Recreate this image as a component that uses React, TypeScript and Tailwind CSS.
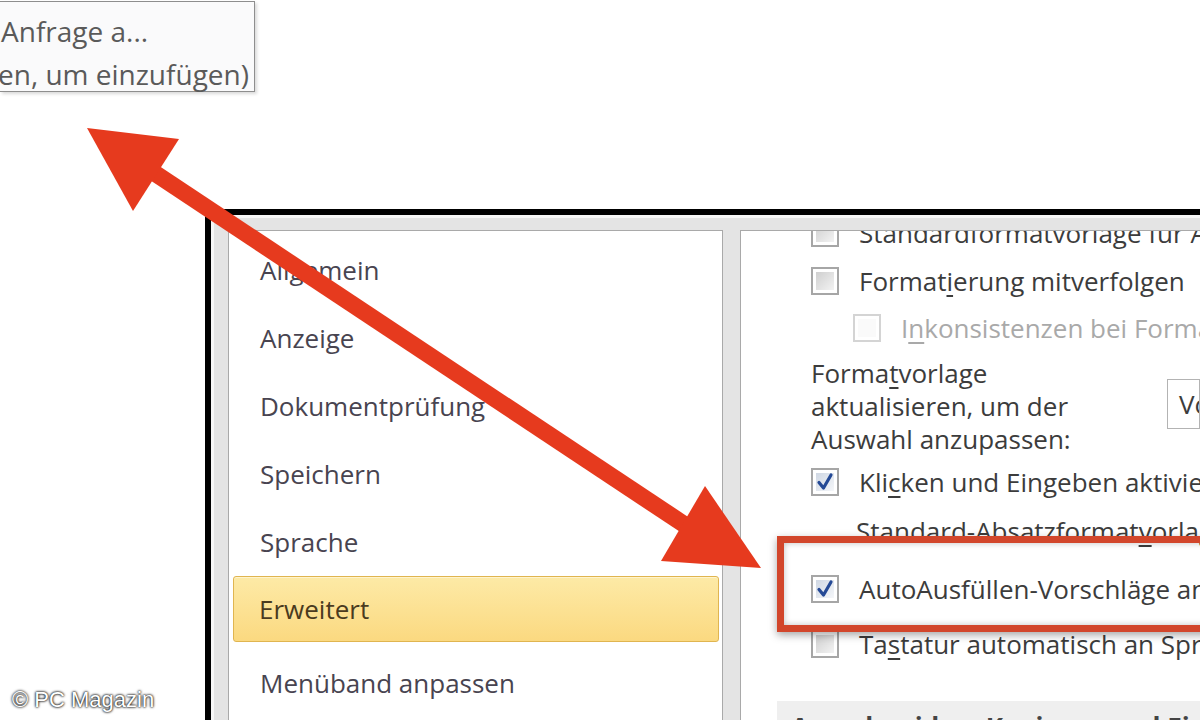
import React from "react";

const font = "font-['Open_Sans','Noto_Sans',sans-serif]";

function Box({ checked = false, faint = false }: { checked?: boolean; faint?: boolean }) {
  return (
    <div
      className={`relative h-[28px] w-[28px] shrink-0 border-2 ${
        faint ? "border-[#d4d4d4]" : "border-[#a6a6a6]"
      } bg-white p-[3px]`}
    >
      <div
        className={`h-full w-full ${
          faint
            ? "bg-[#fafafa]"
            : checked
              ? "bg-linear-to-br from-[#cfd7e3] to-[#f5f7fa]"
              : "bg-linear-to-br from-[#cfcfcf] to-[#f3f3f3]"
        }`}
      />
      {checked && (
        <svg viewBox="0 0 28 28" className="absolute left-[-2px] top-[-2px] h-[28px] w-[28px]">
          <path d="M8 14.5 L12.5 20 L20 7" fill="none" stroke="#254a96" strokeWidth="3.2" strokeLinecap="round" strokeLinejoin="round" />
        </svg>
      )}
    </div>
  );
}

const navItems = ["Allgemein", "Anzeige", "Dokumentprüfung", "Speichern", "Sprache"];

export default function App() {
  return (
    <div className={`relative flex h-[720px] w-[1200px] flex-col overflow-hidden bg-white ${font}`}>
      {/* popup fragment top left */}
      <div className="mt-[1px] flex h-[91px] w-[255px] flex-col border border-l-0 border-[#8e8e8e] bg-[#fafafb] text-[28px] leading-[40px] text-[#5a5a5a] shadow-[2px_2px_3px_rgba(0,0,0,0.15)]">
        <div className="mt-[9px] pl-[1px] whitespace-nowrap">Anfrage a...</div>
        <div className="-ml-[2px] mt-[3px] whitespace-nowrap">en, um einzufügen)</div>
      </div>

      {/* options dialog */}
      <div className="ml-[205px] mt-[117px] flex flex-1 border-l-[6px] border-t-[6px] border-black bg-[#e4e4e4] pl-[17px] pt-[15px] shadow-[inset_3px_3px_0_#f7f7f7]">
        {/* nav */}
        <div className="w-[495px] shrink-0 border border-b-0 border-[#a9a9a9] bg-white pt-[5px] text-[26px] text-[#484450]">
          {navItems.map((n) => (
            <div key={n} className="flex h-[68px] items-center pl-[31px]">
              {n}
            </div>
          ))}
          <div className="ml-[4px] mr-[3px] flex h-[66px] items-center rounded-[3px] border border-[#e0b550] bg-linear-to-b from-[#fdeaa6] to-[#fbd980] pl-[25px] text-[#4a3b1e] shadow-[inset_0_1px_0_#fff4cc]">
            Erweitert
          </div>
          <div className="mt-[7px] flex h-[68px] items-center pl-[31px]">Menüband anpassen</div>
        </div>

        {/* content */}
        <div className="ml-[17px] flex-1 overflow-hidden border-l border-t border-[#a9a9a9] bg-white text-[26px] leading-[33px] text-[#3c3c3c]">
          <div className="-mt-[16px] flex h-[36px] items-center gap-[20px] pl-[70px] whitespace-nowrap">
            <Box />
            <span>Standardformatvorlage für A</span>
          </div>
          <div className="flex h-[60px] items-center gap-[20px] pl-[70px] whitespace-nowrap">
            <Box />
            <span>
              Format<u className="underline-offset-4">i</u>erung mitverfolgen
            </span>
          </div>
          <div className="flex h-[34px] items-center gap-[20px] pl-[112px] whitespace-nowrap text-[#a9a9a9]">
            <Box faint />
            <span>
              I<u className="underline-offset-4">n</u>konsistenzen bei Formatierung markieren
            </span>
          </div>
          <div className="mt-[12px] flex">
            <div className="w-[426px] shrink-0 pl-[70px]">
              Forma<u className="underline-offset-4">t</u>vorlage
              <br />
              aktualisieren, um der
              <br />
              Auswahl anzupassen:
            </div>
            <div className="mt-[22px] flex h-[50px] w-[200px] items-center overflow-hidden whitespace-nowrap border border-[#b3b3b3] pl-[11px]">
              Vorherige Nummerierung beibehalten
            </div>
          </div>
          <div className="flex h-[52px] items-center gap-[20px] pl-[70px] whitespace-nowrap">
            <Box checked />
            <span>
              Kli<u className="underline-offset-4">c</u>ken und Eingeben aktivieren
            </span>
          </div>
          <div className="flex h-[46px] items-center pl-[115px] whitespace-nowrap">
            Standard-Absatzformat<u className="underline-offset-4">v</u>orlage:
          </div>
          <div className="flex h-[70px] items-center gap-[20px] pl-[70px] whitespace-nowrap">
            <Box checked />
            <span>AutoAusfüllen-Vorschläge anzeigen</span>
          </div>
          <div className="flex h-[40px] items-center gap-[20px] pl-[70px] whitespace-nowrap">
            <Box />
            <span>
              Ta<u className="underline-offset-4">s</u>tatur automatisch an Sprache anpassen
            </span>
          </div>
          <div className="ml-[36px] mt-[37px] h-[40px] bg-[#efefef] pl-[14px] pt-[8px] font-bold whitespace-nowrap leading-[36px] text-[#444]">
            Ausschneiden, Kopieren und Einfügen
          </div>
        </div>
      </div>

      {/* red highlight frame */}
      <div className="absolute left-[777px] top-[536px] h-[96px] w-[460px] border-[7px] border-[#d2462b] shadow-[0_3px_8px_rgba(0,0,0,0.35),inset_0_0_6px_rgba(0,0,0,0.25)]" />

      {/* double arrow */}
      <svg className="pointer-events-none absolute left-0 top-0" width="1200" height="720" viewBox="0 0 1200 720">
        <line x1="150" y1="170" x2="688" y2="527" stroke="#e63a1e" strokeWidth="17" />
        <polygon points="87,128 179,139 133,211" fill="#e63a1e" />
        <polygon points="761,568 705,486 661,561" fill="#e63a1e" />
      </svg>

      {/* watermark */}
      <div className="absolute left-[12px] top-[683px] font-['Liberation_Sans',Arial,sans-serif] text-[22px] text-white [text-shadow:0_0_3px_#000,0_0_2px_#000]">
        © PC Magazin
      </div>
    </div>
  );
}
